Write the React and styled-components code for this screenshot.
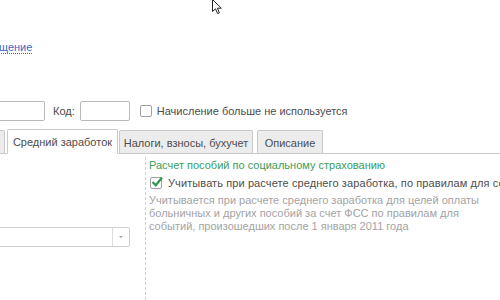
import React from "react";
import styled, { createGlobalStyle } from "styled-components";

const Global = createGlobalStyle`
  html, body { margin: 0; padding: 0; background: #fff; }
  body { font-family: "Liberation Sans", Arial, sans-serif; font-size: 11px; color: #4d4d4d; overflow: hidden; }
`;

const Page = styled.div`
  position: relative;
  width: 500px;
  height: 300px;
  overflow: hidden;
  display: flex;
  flex-direction: column;
`;

const Cursor = styled.svg`
  position: absolute;
  left: 212px;
  top: -1px;
`;

const LinkRow = styled.div`
  margin-top: 40px;
  height: 14px;
  display: flex;
  align-items: center;
`;

const Link = styled.span`
  color: #3b69c4;
  font-size: 11px;
  border-bottom: 1px dotted #3b69c4;
  line-height: 12px;
  margin-left: -1px;
`;

const FieldRow = styled.div`
  margin-top: 47px;
  display: flex;
  align-items: center;
  height: 20px;
`;

const Input = styled.div`
  box-sizing: border-box;
  width: ${(p) => p.$w}px;
  height: 20px;
  margin-left: ${(p) => p.$ml || 0}px;
  border: 1px solid #b9b9b9;
  border-radius: 2px;
  background: #fff;
  flex: none;
`;

const Label = styled.span`
  margin-left: ${(p) => p.$ml || 0}px;
  color: #4d4d4d;
  white-space: nowrap;
  letter-spacing: ${(p) => p.$ls || 0}px;
`;

const Box = styled.span`
  box-sizing: border-box;
  width: 12px;
  height: 12px;
  margin-left: ${(p) => p.$ml || 0}px;
  border: 1px solid #a0a0a0;
  border-radius: 2px;
  background: #fff;
  display: inline-flex;
  position: relative;
  flex: none;
`;

const Tabs = styled.div`
  margin-top: 7px;
  display: flex;
  align-items: flex-end;
  height: 25px;
  border-bottom: 1px solid #c9c9c9;
`;

const Tab = styled.div`
  box-sizing: border-box;
  flex: none;
  height: ${(p) => (p.$active ? 25 : 23)}px;
  margin-left: ${(p) => p.$ml}px;
  width: ${(p) => p.$w}px;
  padding-top: 1px;
  display: flex;
  align-items: center;
  justify-content: center;
  background: ${(p) => (p.$active ? "#fff" : "#ececec")};
  border: 1px solid #c9c9c9;
  border-bottom: ${(p) => (p.$active ? "1px solid #fff" : "none")};
  border-radius: 2px 2px 0 0;
  margin-bottom: ${(p) => (p.$active ? -1 : 0)}px;
  color: #4d4d4d;
  white-space: nowrap;
`;

const Body = styled.div`
  flex: 1;
  display: flex;
  min-width: 0;
`;

const LeftCol = styled.div`
  width: 145px;
  flex: none;
  padding-top: 73px;
  padding-right: 15px;
  box-sizing: border-box;
`;

const Select = styled.div`
  box-sizing: border-box;
  height: 20px;
  margin-left: -10px;
  border: 1px solid #cfcfcf;
  border-radius: 2px;
  display: flex;
  justify-content: flex-end;
`;

const SelectBtn = styled.div`
  width: 16px;
  border-left: 1px solid #dcdcdc;
  display: flex;
  align-items: center;
  justify-content: center;
`;

const Arrow = styled.span`
  width: 0;
  height: 0;
  border-left: 2px solid transparent;
  border-right: 2px solid transparent;
  border-top: 2px solid #a0a0a0;
`;

const RightCol = styled.div`
  flex: 1;
  min-width: 0;
  overflow: hidden;
  border-left: 1px dashed #cfcfcf;
  margin-top: 3px;
  padding-left: 3px;
  padding-top: 1px;
`;

const GroupTitle = styled.div`
  color: #3a9d5b;
  line-height: 15px;
  white-space: nowrap;
`;

const CheckRow = styled.div`
  display: flex;
  align-items: center;
  height: 16px;
  margin-top: 2px;
  margin-left: 1px;
`;

const Hint = styled.div`
  color: #a3a3a3;
  line-height: 13px;
  margin-top: 3px;
  width: 330px;
`;

export default function App() {
  return (
    <>
      <Global />
      <Page>
        <Cursor width="12" height="16" viewBox="0 0 12 16">
          <path d="M0.5 0.5 L0.5 12.5 L3.5 9.8 L5.6 14.6 L7.4 13.8 L5.4 9.2 L9.3 9.2 Z" fill="#fff" stroke="#222" strokeWidth="1" strokeLinejoin="round" />
        </Cursor>
        <LinkRow>
          <Link>щение</Link>
        </LinkRow>
        <FieldRow>
          <Input $w={60} $ml={-15} />
          <Label $ml={8}>Код:</Label>
          <Input $w={50} $ml={5} />
          <Box $ml={10} />
          <Label $ml={5}>Начисление больше не используется</Label>
        </FieldRow>
        <Tabs>
          <Tab $ml={-20} $w={25} />
          <Tab $active $ml={2} $w={111}>Средний заработок</Tab>
          <Tab $ml={1} $w={134}>Налоги, взносы, бухучет</Tab>
          <Tab $ml={4} $w={66}>Описание</Tab>
        </Tabs>
        <Body>
          <LeftCol>
            <Select>
              <SelectBtn>
                <Arrow />
              </SelectBtn>
            </Select>
          </LeftCol>
          <RightCol>
            <GroupTitle>Расчет пособий по социальному страхованию</GroupTitle>
            <CheckRow>
              <Box>
                <svg width="13" height="12" viewBox="0 0 13 12" style={{ position: "absolute", left: 0, top: -2 }}>
                  <path d="M1.5 6 L4.8 9.3 L11 1.5" fill="none" stroke="#2e9a4c" strokeWidth="2.2" />
                </svg>
              </Box>
              <Label $ml={6} $ls={0.1}>Учитывать при расчете среднего заработка, по правилам для событий, произошедших после 1 января 2011 года</Label>
            </CheckRow>
            <Hint>
              Учитывается при расчете среднего заработка для целей оплаты больничных и других пособий за счет ФСС по правилам для событий, произошедших после 1 января 2011 года
            </Hint>
          </RightCol>
        </Body>
      </Page>
    </>
  );
}
